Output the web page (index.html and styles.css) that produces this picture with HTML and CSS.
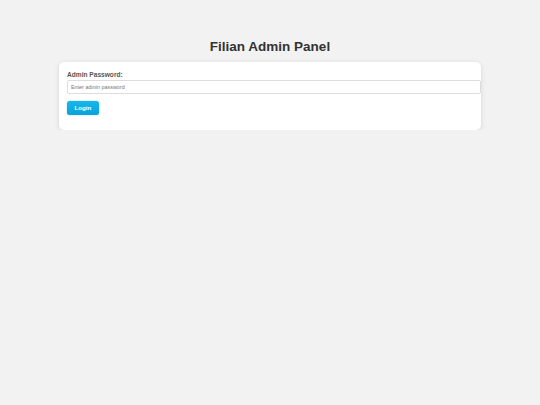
FILE: index.html
```html
<!DOCTYPE html>
<html>

<head>
  <title>Filian Admin Panel</title>
  <link rel="stylesheet" href="styles.css">
</head>

<body>
  <div class="container">
    <h1>Filian Admin Panel</h1>
    <div class="login-card">
      <form class="login-form" onsubmit="return false">
        <label for="adminPassword">Admin Password:</label>
        <input type="password" id="adminPassword" name="adminPassword" placeholder="Enter admin password">
        <button type="submit" class="login-button">Login</button>
      </form>
    </div>
  </div>
</body>

</html>
```

FILE: styles.css
```css
body {
  background-color: #f2f2f2;
  font-family: "Liberation Sans", Arial, sans-serif;
  margin: 0;
  padding: 0;
}

.container {
  width: 422px;
  margin: 0 auto;
  padding-top: 39px;
}

.container h1 {
  text-align: center;
  color: #333;
  font-size: 13.5px;
  margin: 0 0 8px 0;
}

.login-card {
  background-color: #fff;
  border-radius: 5px;
  box-shadow: 0 1px 5px rgba(0, 0, 0, 0.12);
  padding: 9px 8px 15px 8px;
}

.login-form label {
  display: block;
  color: #555;
  font-size: 6.6px;
  font-weight: bold;
  margin-bottom: 1.5px;
}

.login-form input[type="password"] {
  display: block;
  width: 100%;
  height: 6px;
  padding: 3px;
  border: 1px solid #ddd;
  border-radius: 2px;
  font-family: "Liberation Sans", Arial, sans-serif;
  font-size: 5.4px;
  margin: 0 0 7px 0;
}

.login-form input::placeholder {
  color: #777;
}

.login-button {
  display: block;
  height: 14px;
  padding: 0 7.5px;
  border: none;
  border-radius: 2.5px;
  background: linear-gradient(to bottom, #14b8ec, #0aa2d9);
  box-shadow: 0 0 2px rgba(0, 150, 210, 0.4);
  color: #fff;
  font-family: "Liberation Sans", Arial, sans-serif;
  font-size: 6.2px;
  font-weight: bold;
  cursor: pointer;
}
```
